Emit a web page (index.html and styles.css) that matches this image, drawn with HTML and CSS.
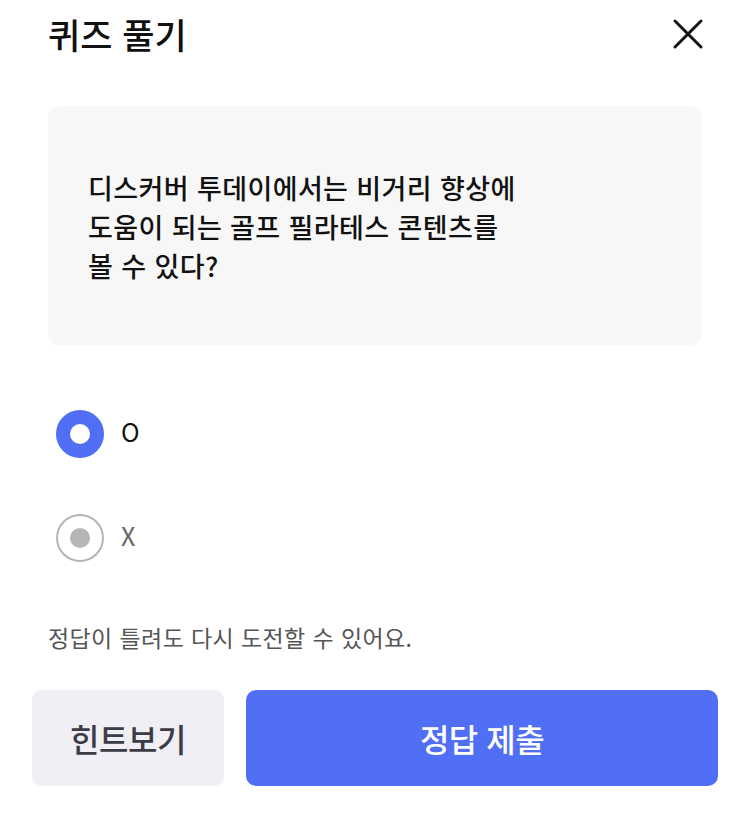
FILE: index.html
```html
<!DOCTYPE html>
<html lang="ko">
<head>
  <meta charset="UTF-8" />
  <meta name="viewport" content="width=device-width, initial-scale=1.0" />
  <title>퀴즈 풀기</title>
  <link rel="stylesheet" href="styles.css">
</head>
<body>
  <div class="sheet">
    <header class="head">
      <h1>퀴즈 풀기</h1>
      <button class="close" type="button" aria-label="닫기">
        <svg width="32" height="32" viewBox="0 0 32 32">
          <path d="M3 3 L29 29 M29 3 L3 29" stroke="#111" stroke-width="3" stroke-linecap="round" fill="none"/>
        </svg>
      </button>
    </header>

    <div class="question">
      <p>디스커버 투데이에서는 비거리 향상에<br>도움이 되는 골프 필라테스 콘텐츠를<br>볼 수 있다?</p>
    </div>

    <div class="options">
      <label class="option checked">
        <span class="radio"></span>
        <span class="label">O</span>
      </label>
      <label class="option">
        <span class="radio"></span>
        <span class="label">X</span>
      </label>
    </div>

    <p class="notice">정답이 틀려도 다시 도전할 수 있어요.</p>

    <div class="actions">
      <button class="btn hint" type="button">힌트보기</button>
      <button class="btn submit" type="button">정답 제출</button>
    </div>
  </div>
</body>
</html>
```

FILE: styles.css
```css
:root {
  --blue: #516ff5;
  --card: #f7f7f7;
  --hint: #efeff5;
  --kr: "Noto Sans CJK KR", "Noto Sans", sans-serif;
}
* { box-sizing: border-box; }
body {
  margin: 0;
  background: #fff;
  color: #111;
  font-family: var(--kr);
}
.sheet {
  width: 750px;
  padding: 0 32px;
}
.head {
  display: flex;
  align-items: center;
  justify-content: space-between;
  height: 68px;
  padding: 0 16px;
}
.head h1 {
  margin: 0 0 2px;
  font-size: 35px;
  font-weight: 500;
  letter-spacing: 0;
}
.close {
  display: flex;
  padding: 0;
  margin-right: -2px;
  border: 0;
  background: none;
}
.question {
  margin: 38px 16px 0;
  height: 239px;
  padding: 62px 40px 0;
  background: var(--card);
  border-radius: 12px;
}
.question p {
  margin: 0;
  font-size: 27px;
  font-weight: 500;
  line-height: 39px;
  letter-spacing: 0.4px;
}
.options {
  display: flex;
  flex-direction: column;
  gap: 56px;
  margin: 65px 16px 0 24px;
}
.option {
  display: flex;
  align-items: center;
  gap: 17px;
}
.radio {
  width: 48px;
  height: 48px;
  border-radius: 50%;
  border: 2px solid #b5b5b5;
  display: flex;
  align-items: center;
  justify-content: center;
}
.radio::after {
  content: "";
  width: 20px;
  height: 20px;
  border-radius: 50%;
  background: #b5b5b5;
}
.option.checked .radio {
  background: var(--blue);
  border-color: var(--blue);
}
.option.checked .radio::after { background: #fff; }
.label {
  font-size: 25px;
  color: #666;
  margin-top: -6px;
}
.option.checked .label { color: #111; }
.notice {
  margin: 58px 16px 0;
  font-size: 23px;
  color: #555;
  letter-spacing: 0.4px;
}
.actions {
  display: flex;
  gap: 22px;
  margin-top: 36px;
}
.btn {
  height: 96px;
  border: 0;
  border-radius: 10px;
  font-family: var(--kr);
  font-size: 32px;
  font-weight: 500;
  letter-spacing: -0.5px;
}
.hint {
  width: 192px;
  background: var(--hint);
  color: #3c3c46;
}
.submit {
  flex: 1;
  background: var(--blue);
  color: #fff;
}
```
